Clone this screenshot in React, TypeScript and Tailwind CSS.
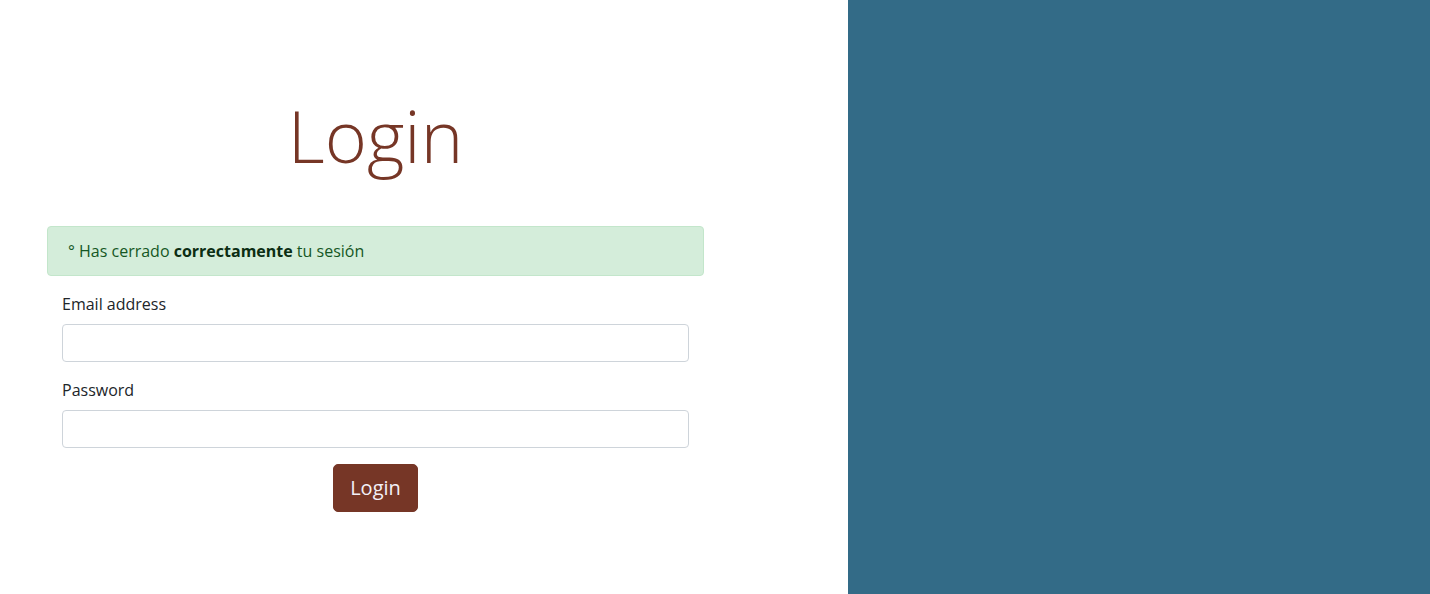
import React from "react"

const App = () => {
    return (
        <main
            className="flex h-[594px] w-full bg-white"
            style={{ fontFamily: '"Open Sans", "Noto Sans", sans-serif' }}
        >
            {/*   Left side: form   */}
            <section className="w-[848px] shrink-0 pt-[92px]">
                <div className="ml-[47px] w-[657px]">
                    <h1 className="text-center text-[72px] font-light leading-[1.2] text-[#763626]">
                        Login
                    </h1>

                    <div className="mt-[48px] rounded border border-[#c3e6cb] bg-[#d4edda] px-5 py-3 text-base leading-6 text-[#155724]">
                        ° Has cerrado <b className="font-bold text-[#0b2e13]">correctamente</b> tu sesión
                    </div>

                    <form className="mt-4 px-[15px]">
                        <div className="mb-4">
                            <label className="mb-2 block text-base leading-6 text-[#212529]">
                                Email address
                            </label>
                            <input
                                type="email"
                                className="block h-[38px] w-full rounded border border-[#ced4da] bg-white px-3 outline-0"
                            />
                        </div>
                        <div className="mb-4">
                            <label className="mb-2 block text-base leading-6 text-[#212529]">
                                Password
                            </label>
                            <input
                                type="password"
                                className="block h-[38px] w-full rounded border border-[#ced4da] bg-white px-3 outline-0"
                            />
                        </div>
                        <div className="text-center">
                            <button
                                type="button"
                                className="rounded-[5px] border border-[#763626] bg-[#763626] px-4 py-2 text-xl leading-[30px] text-[#f3f0f7]"
                            >
                                Login
                            </button>
                        </div>
                    </form>
                </div>
            </section>

            {/*   Right side: colour panel   */}
            <section className="flex-1 bg-[#336b87]" />
        </main>
    )
}

export default App
